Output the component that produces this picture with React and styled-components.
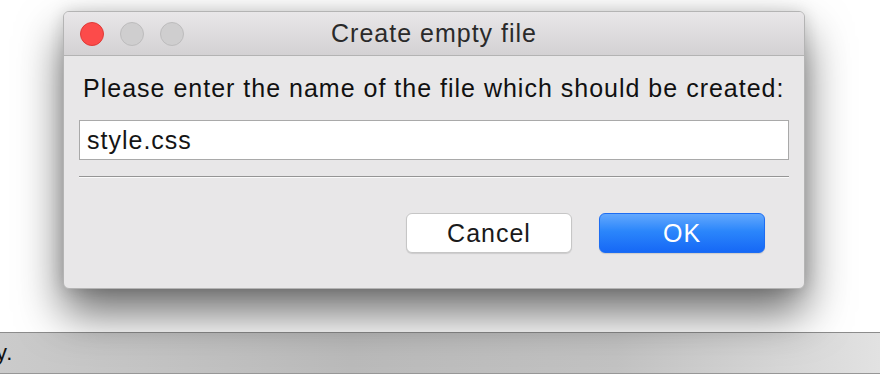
import styled, { createGlobalStyle } from 'styled-components';

const GlobalStyle = createGlobalStyle`
html, body {
	margin: 0;
	padding: 0;
	background: #ffffff;
}
body {
	font-family: 'Liberation Sans', Arial, sans-serif;
	letter-spacing: 1px;
}
`;

const Page = styled.div`
width: 880px;
height: 382px;
overflow: hidden;
display: flex;
flex-direction: column;
background: #ffffff;
`;

const DialogArea = styled.div`
padding: 11px 0 0 63px;
position: relative;
z-index: 1;
`;

const Dialog = styled.div`
width: 740px;
height: 276px;
background: #e8e7e8;
border: 1px solid #b4b4b4;
border-radius: 6px;
box-shadow: 0 24px 45px rgba(0, 0, 0, 0.58), 0 0 16px rgba(0, 0, 0, 0.14);
overflow: hidden;
display: flex;
flex-direction: column;
`;

const TitleBar = styled.div`
height: 43px;
display: flex;
align-items: center;
padding-left: 16px;
background: linear-gradient(#e9e7e9, #d3d1d3);
border-bottom: 1px solid #b3b3b3;
`;

const Light = styled.span`
width: 24px;
height: 24px;
border-radius: 50%;
margin-right: 16px;
box-sizing: border-box;
background: ${p => (p.red ? '#fc4b4a' : '#cfcecf')};
border: 1px solid ${p => (p.red ? '#df3a37' : '#bdbcbd')};
`;

const Title = styled.div`
flex: 1;
text-align: center;
margin-right: 136px;
font-size: 25px;
color: #2a2a2a;
`;

const Body = styled.div`
padding: 18px 15px 0 15px;
display: flex;
flex-direction: column;
`;

const Label = styled.div`
font-size: 25px;
line-height: 28px;
color: #111;
margin-left: 4px;
`;

const Input = styled.div`
margin-top: 18px;
height: 38px;
background: #fff;
border: 1px solid #a9a9a9;
font-size: 25px;
color: #151515;
display: flex;
align-items: center;
padding-left: 7px;
`;

const Separator = styled.div`
margin-top: 16px;
border-top: 1px solid #959595;
border-bottom: 1px solid #fafafa;
`;

const Buttons = styled.div`
display: flex;
justify-content: flex-end;
gap: 27px;
margin-top: 35px;
padding-right: 24px;
`;

const Button = styled.div`
width: 166px;
height: 40px;
border-radius: 6px;
display: flex;
align-items: center;
justify-content: center;
font-size: 25px;
box-sizing: border-box;
color: ${p => (p.primary ? '#ffffff' : '#1a1a1a')};
background: ${p => (p.primary ? 'linear-gradient(#63a8fd, #2b86fb 45%, #1668f6)' : '#ffffff')};
border: 1px solid ${p => (p.primary ? '#1d6df2' : '#c6c6c6')};
box-shadow: 0 1px 1px rgba(0, 0, 0, 0.12);
`;

const StatusBar = styled.div`
margin-top: 43px;
height: 40px;
border-top: 1px solid #8c8c8c;
border-bottom: 1px solid #979797;
background: linear-gradient(90deg, #cbcbcb, #bababa 40%, #c2c2c2 70%, #e2e2e2);
display: flex;
align-items: center;
font-size: 22px;
color: #111;
`;

const Cut = styled.span`
margin-left: -4px;
`;

const App = () => {
	return (
		<Page>
			<GlobalStyle />
			<DialogArea>
				<Dialog>
					<TitleBar>
						<Light red />
						<Light />
						<Light />
						<Title>Create empty file</Title>
					</TitleBar>
					<Body>
						<Label>Please enter the name of the file which should be created:</Label>
						<Input>style.css</Input>
						<Separator />
						<Buttons>
							<Button>Cancel</Button>
							<Button primary>OK</Button>
						</Buttons>
					</Body>
				</Dialog>
			</DialogArea>
			<StatusBar>
				<Cut>y.</Cut>
			</StatusBar>
		</Page>
	)
}

export default App
